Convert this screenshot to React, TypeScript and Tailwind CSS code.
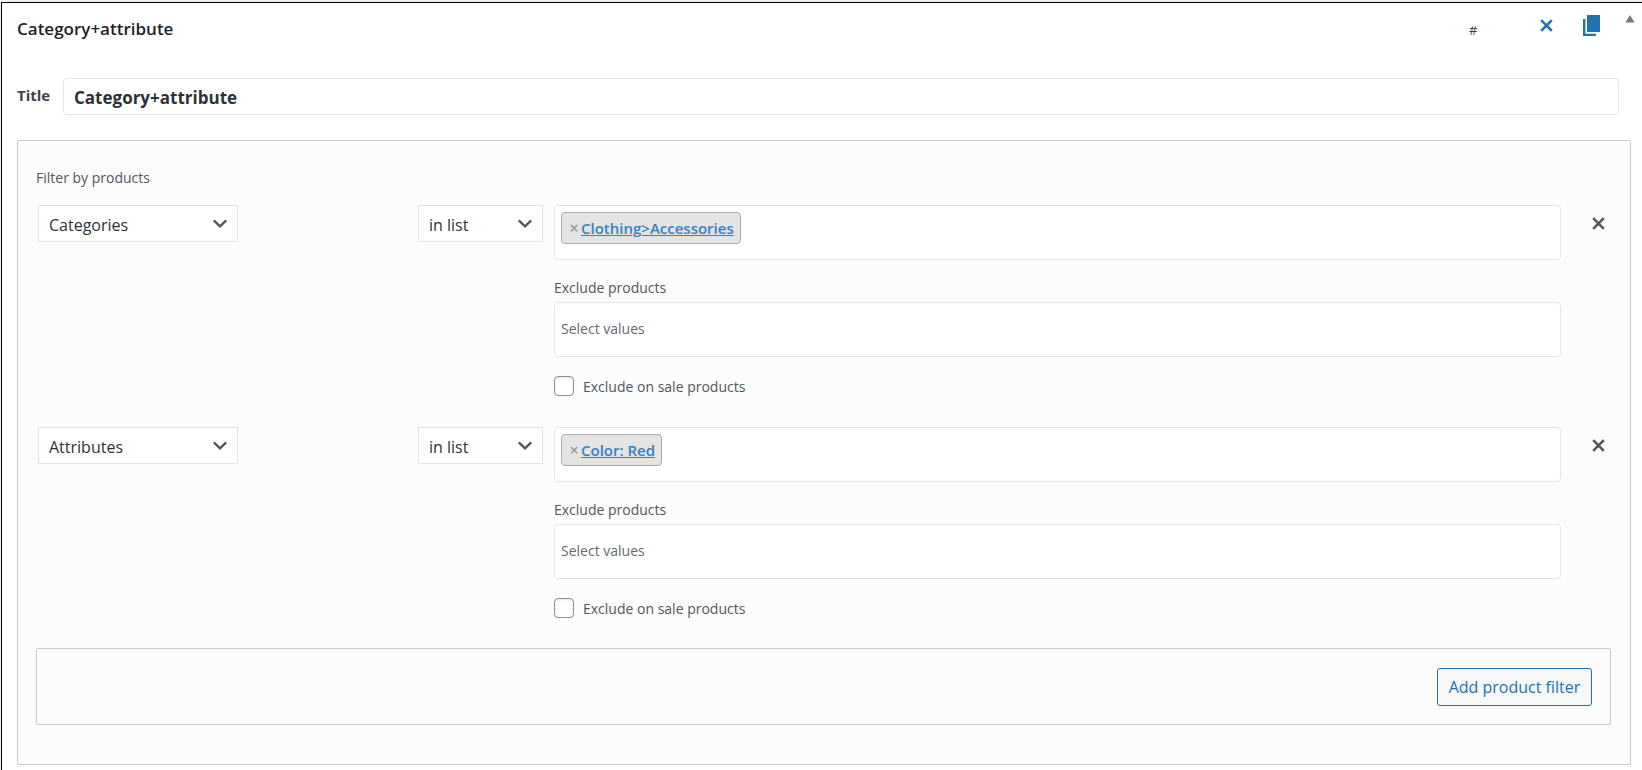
import React, { useState } from 'react';

type Filter = {
  id: number;
  type: string;
  method: string;
  value: string;
};

const filterTypes = ['Categories', 'Attributes', 'Products', 'Tags'];
const methods = ['in list', 'not in list'];

const filters: Filter[] = [
  { id: 1, type: 'Categories', method: 'in list', value: 'Clothing>Accessories' },
  { id: 2, type: 'Attributes', method: 'in list', value: 'Color: Red' },
];

function CrossIcon() {
  return (
    <svg width="14" height="14" viewBox="0 0 14 14" fill="none" stroke="currentColor" strokeWidth="2.6">
      <path d="M1.2 1.2L11.8 11.8M11.8 1.2L1.2 11.8" />
    </svg>
  );
}

function CopyIcon() {
  return (
    <svg width="18" height="22" viewBox="0 0 18 22" fill="currentColor">
      <path d="M4 0H17V17H4zM0 4H2.4V18.8H13V21H0z" />
    </svg>
  );
}

type SelectProps = {
  label: string;
  options: string[];
  defaultValue: string;
  className: string;
};

function Select({ label, options, defaultValue, className }: SelectProps) {
  return (
    <div className={`relative shrink-0 ${className}`}>
      <select
        aria-label={label}
        defaultValue={defaultValue}
        className="block w-full h-[37px] appearance-none border border-[#e3e3e3] bg-white pt-0.5 pl-[10px] pr-8 text-[16px] text-[#2c3338]"
      >
        {options.map((option) => (
          <option key={option}>{option}</option>
        ))}
      </select>
      <svg
        className="pointer-events-none absolute right-[10px] top-[13px]"
        width="16"
        height="12"
        viewBox="0 0 16 12"
        fill="none"
        stroke="#555"
        strokeWidth="2.3"
      >
        <path d="M1.8 2.3L8 8.3L14.2 2.3" />
      </svg>
    </div>
  );
}

function FilterRow({ filter }: { filter: Filter }) {
  const [onSale, setOnSale] = useState(false);
  const excludeId = `exclude-${filter.id}`;
  const saleId = `on-sale-${filter.id}`;

  return (
    <div className="flex items-start pl-[2px]">
      <div className="w-[380px] shrink-0">
        <Select label="Filter type" options={filterTypes} defaultValue={filter.type} className="w-[200px]" />
      </div>
      <Select label="Method" options={methods} defaultValue={filter.method} className="w-[125px]" />

      <div className="ml-[11px] min-w-0 flex-1">
        <div className="flex h-[55px] items-start rounded border border-[#e5e5e5] bg-white p-[6px]">
          <div className="flex h-8 items-center rounded border border-[#aaa] bg-[#e4e4e4] pr-[6px] pl-[5px]">
            <button aria-label={`Remove ${filter.value}`} className="w-[14px] text-center text-[16px] font-semibold text-[#999]">
              ×
            </button>
            <a href="#" className="text-[15px] font-semibold text-[#3582c4] underline">
              {filter.value}
            </a>
          </div>
        </div>

        <label htmlFor={excludeId} className="mt-[18px] mb-1 block text-[14px] leading-5 text-[#50575e]">
          Exclude products
        </label>
        <input
          id={excludeId}
          type="text"
          placeholder="Select values"
          className="block h-[55px] w-full rounded border border-[#e5e5e5] bg-white px-[6px] pb-[3px] text-[14px] text-[#2c3338] placeholder:text-[#646970]"
        />

        <div className="mt-[19px] flex h-5 items-center gap-[9px]">
          <input
            id={saleId}
            type="checkbox"
            checked={onSale}
            onChange={(e) => setOnSale(e.target.checked)}
            className="size-5 appearance-none rounded border border-[#8c8f94] bg-white shadow-[inset_0_1px_2px_rgba(0,0,0,0.1)] checked:bg-[#2271b1]"
          />
          <label htmlFor={saleId} className="pt-0.5 text-[14px] leading-5 text-[#50575e]">
            Exclude on sale products
          </label>
        </div>
      </div>

      <button aria-label="Remove filter" className="ml-[26px] flex h-[37px] w-6 items-center justify-center text-[#50575e]">
        <CrossIcon />
      </button>
    </div>
  );
}

export default function App() {
  return (
    <div className="min-h-screen bg-[#f0f0f1] pt-[2px] pl-px font-['Open_Sans','Noto_Sans',sans-serif]">
      <div className="min-h-[calc(100vh-2px)] border-t border-l border-black bg-white pr-[11px] pb-[5px] pl-[15px]">
        <header className="-mr-[6px] flex h-[52px] items-center">
          <h1 className="flex-1 text-[17px] font-semibold text-[#1d2327]">Category+attribute</h1>
          <div className="flex items-center text-[#2271b1]">
            <span className="w-[66px] pt-1 text-[13px] text-[#3c434a]">#</span>
            <button aria-label="Delete rule" className="flex h-8 w-6 items-start justify-center pt-[6px]">
              <CrossIcon />
            </button>
            <button aria-label="Duplicate rule" className="ml-6 flex h-8 w-[18px] items-start pt-[2px]">
              <CopyIcon />
            </button>
            <button aria-label="Collapse rule" className="ml-[21px] flex h-8 w-[15px] items-start justify-center pt-[2px]">
              <svg width="10" height="8" viewBox="0 0 10 8" fill="#787c82">
                <path d="M5 0L9.7 7.5H0.3z" />
              </svg>
            </button>
          </div>
        </header>

        <div className="mt-[23px] mr-3 flex items-center">
          <label htmlFor="rule-title" className="w-[46px] shrink-0 pb-0.5 text-[15px] font-bold text-[#3c434a]">
            Title
          </label>
          <input
            id="rule-title"
            type="text"
            defaultValue="Category+attribute"
            className="h-[37px] min-w-0 flex-1 rounded border border-[#e5e5e5] bg-white px-[10px] pt-0.5 text-[17px] font-bold text-[#2c3338]"
          />
        </div>

        <section className="mt-[25px] rounded-xs border border-[#c9cacc] bg-[#fcfcfc] pt-[27px] pr-[19px] pb-[39px] pl-[18px]">
          <h2 className="text-[14px] leading-5 text-[#50575e]">Filter by products</h2>

          <div className="mt-[17px] flex flex-col gap-[31px]">
            {filters.map((filter) => (
              <FilterRow key={filter.id} filter={filter} />
            ))}
          </div>

          <div className="mt-[30px] flex justify-end rounded-xs border border-[#c9cacc] px-[18px] pt-[19px] pb-[18px]">
            <button className="h-[38px] w-[155px] rounded-[3px] border border-[#2271b1] bg-[#f6f7f7] text-[16px] whitespace-nowrap text-[#2271b1]">
              Add product filter
            </button>
          </div>
        </section>
      </div>
    </div>
  );
}
